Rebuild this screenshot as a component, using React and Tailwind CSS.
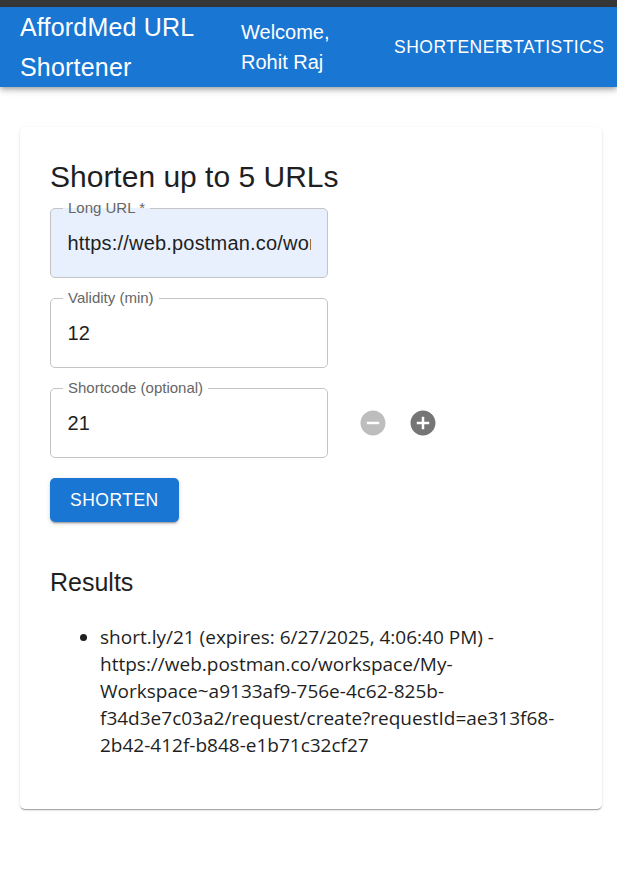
import React from "react";

const AddCircle = ({ className }) => (
  <svg viewBox="0 0 24 24" className={className} fill="currentColor">
    <path d="M12 2C6.48 2 2 6.48 2 12s4.48 10 10 10 10-4.48 10-10S17.52 2 12 2zm5 11h-4v4h-2v-4H7v-2h4V7h2v4h4v2z" />
  </svg>
);

const RemoveCircle = ({ className }) => (
  <svg viewBox="0 0 24 24" className={className} fill="currentColor">
    <path d="M12 2C6.48 2 2 6.48 2 12s4.48 10 10 10 10-4.48 10-10S17.52 2 12 2zm5 11H7v-2h10v2z" />
  </svg>
);

function Field({ label, value, autofill }) {
  return (
    <div
      className={
        "relative w-[278px] h-[70px] rounded-[5px] border border-[#c4c4c4] flex items-center pl-[16.5px] " +
        (autofill ? "bg-[#e8f0fe]" : "bg-white")
      }
    >
      <span
        className={
          "absolute left-[12px] -top-[10px] px-[5px] text-[15px] leading-[18px] text-[#666666] whitespace-nowrap " +
          (autofill
            ? "bg-[linear-gradient(to_bottom,#ffffff_50%,#e8f0fe_50%)]"
            : "bg-white")
        }
      >
        {label}
      </span>
      <span className="text-[20px] leading-[24px] tracking-[0.19px] text-[#1f1f1f] whitespace-nowrap overflow-hidden w-[243px]">
        {value}
      </span>
    </div>
  );
}

export default function App() {
  return (
    <div className="min-h-[873px] bg-white font-['Liberation_Sans',Arial,sans-serif]">
      <div className="h-[7px] bg-[#383838]" />
      <header className="h-[80px] bg-[#1976d2] text-white flex items-center pl-[20px] pr-[18px] shadow-[0_2px_4px_-1px_rgba(0,0,0,0.2),0_4px_5px_0_rgba(0,0,0,0.14),0_1px_10px_0_rgba(0,0,0,0.12)] relative z-10">
        <div className="w-[221px] shrink-0 text-[25px] leading-[40px] tracking-[0.2px]">
          AffordMed URL
          <br />
          Shortener
        </div>
        <div className="w-[142px] shrink-0 text-[20px] leading-[30px]">
          Welcome,
          <br />
          Rohit Raj
        </div>
        <nav className="flex">
          <div className="w-[108px] pl-[11px] text-[17.5px] leading-[30px] tracking-[0.5px] whitespace-nowrap">
            SHORTENER
          </div>
          <div className="w-[104px] pl-[10px] text-[17.5px] leading-[30px] tracking-[0.5px] whitespace-nowrap">
            STATISTICS
          </div>
        </nav>
      </header>

      <main className="pt-[40px] pl-[20px] pr-[15px]">
        <section className="rounded-[5px] bg-white px-[30px] pt-[30px] pb-[50px] shadow-[0_2px_1px_-1px_rgba(0,0,0,0.2),0_1px_1px_0_rgba(0,0,0,0.14),0_1px_3px_0_rgba(0,0,0,0.12)]">
          <h2 className="text-[30px] leading-[40px] text-[#1f1f1f] mb-[11px]">
            Shorten up to 5 URLs
          </h2>
          <div className="flex flex-col gap-[20px]">
            <Field label="Long URL *" value="https://web.postman.co/workspace/My-Workspace" autofill />
            <Field label="Validity (min)" value="12" />
            <div className="flex items-center gap-[20px]">
              <Field label="Shortcode (optional)" value="21" />
              <div className="flex">
                <div className="w-[50px] h-[50px] flex items-center justify-center text-[#bdbdbd]">
                  <RemoveCircle className="w-[30px] h-[30px]" />
                </div>
                <div className="w-[50px] h-[50px] flex items-center justify-center text-[#757575]">
                  <AddCircle className="w-[30px] h-[30px]" />
                </div>
              </div>
            </div>
          </div>
          <button className="mt-[20px] h-[44px] px-[20px] rounded-[5px] bg-[#1976d2] text-white text-[17.5px] tracking-[0.5px] shadow-[0_3px_1px_-2px_rgba(0,0,0,0.2),0_2px_2px_0_rgba(0,0,0,0.14),0_1px_5px_0_rgba(0,0,0,0.12)]">
            SHORTEN
          </button>

          <h3 className="mt-[40px] text-[25px] leading-[40px] text-[#1f1f1f]">Results</h3>
          <ul className="list-disc pl-[50px] mt-[22px] text-[19px] leading-[27px] text-[#1f1f1f] font-['Open_Sans','Noto_Sans',sans-serif] break-words">
            <li>
              short.ly/21 (expires: 6/27/2025, 4:06:40 PM) - https://web.postman.co/workspace/My-Workspace~a9133af9-756e-4c62-825b-f34d3e7c03a2/request/create?requestId=ae313f68-2b42-412f-b848-e1b71c32cf27
            </li>
          </ul>
        </section>
      </main>
    </div>
  );
}
